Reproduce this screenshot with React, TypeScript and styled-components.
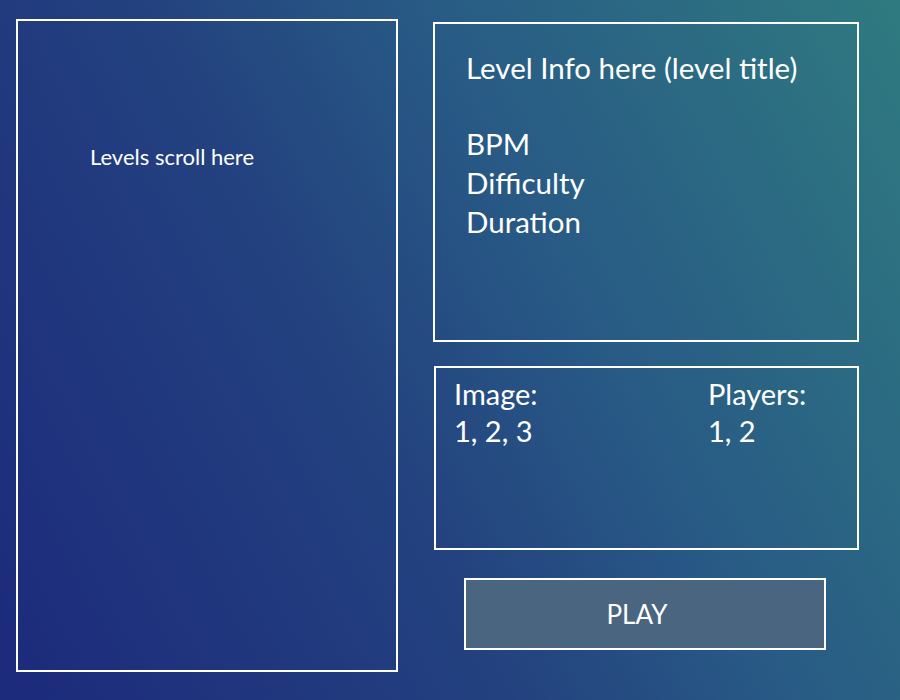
import React from 'react';
import styled, { createGlobalStyle } from 'styled-components';

const GlobalStyle = createGlobalStyle`
  html, body {
    margin: 0;
    padding: 0;
  }
  * {
    box-sizing: border-box;
  }
`;

const Screen = styled.div`
  width: 900px;
  height: 700px;
  display: flex;
  align-items: flex-start;
  gap: 35px;
  padding: 19px 0 0 16px;
  overflow: hidden;
  background: linear-gradient(62deg, #1c2a7c 0%, #23417f 40%, #285a85 62%, #2f7a80 100%);
  font-family: Lato, "Liberation Sans", sans-serif;
  color: #ffffff;
`;

const Frame = styled.div`
  border: 2px solid #ffffff;
`;

const LevelList = styled(Frame)`
  width: 382px;
  height: 653px;
  padding: 122px 0 0 72px;
  font-size: 22px;
  line-height: 28px;
`;

const Side = styled.div`
  width: 426px;
  margin-top: 3px;
  display: flex;
  flex-direction: column;
  align-items: center;
`;

const InfoCard = styled(Frame)`
  width: 426px;
  height: 320px;
  padding: 24px 0 0 31px;
  font-size: 29.5px;
  line-height: 39px;
`;

const Title = styled.div`
  margin-bottom: 37px;
`;

const MediaCard = styled(Frame)`
  width: 425px;
  height: 184px;
  margin: 24px 0 0 1px;
  padding: 7px 0 0 18px;
  display: grid;
  grid-template-columns: 254px 1fr;
  align-content: start;
  font-size: 29px;
  line-height: 37px;
`;

const PlayButton = styled.button`
  width: 362px;
  height: 72px;
  margin: 28px 2px 0 0;
  padding: 0 16px 0 0;
  border: 2px solid #ffffff;
  background: #4a6580;
  color: #ffffff;
  font-family: Lato, "Liberation Sans", sans-serif;
  font-size: 26px;
  cursor: pointer;
`;

export default function App() {
  return (
    <>
      <GlobalStyle />
      <Screen>
        <LevelList>Levels scroll here</LevelList>
        <Side>
          <InfoCard>
            <Title>Level Info here (level title)</Title>
            <div>BPM</div>
            <div>Difficulty</div>
            <div>Duration</div>
          </InfoCard>
          <MediaCard>
            <div>Image:</div>
            <div>Players:</div>
            <div>1, 2, 3</div>
            <div>1, 2</div>
          </MediaCard>
          <PlayButton>PLAY</PlayButton>
        </Side>
      </Screen>
    </>
  );
}
